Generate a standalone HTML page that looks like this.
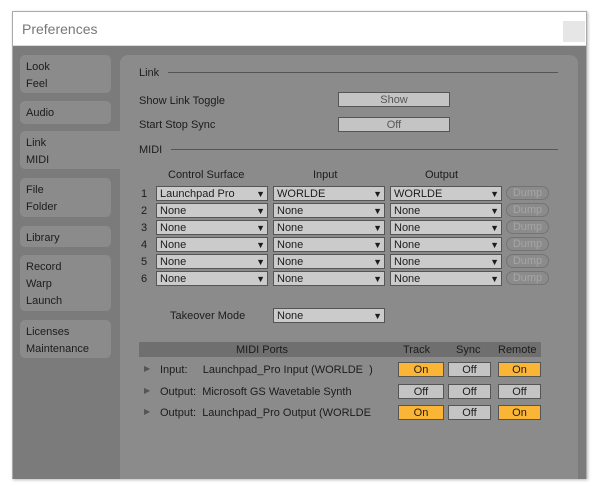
<!DOCTYPE html>
<html><head><style>
*{margin:0;padding:0;box-sizing:border-box}
body{width:603px;height:486px;background:#fff;position:relative;overflow:hidden;font-family:"Liberation Sans",sans-serif;font-size:11px;color:#1c1c1c}
.a{position:absolute}
.win{left:12px;top:11px;width:575px;height:468px;border:1px solid #aaa;box-shadow:1px 1px 3px #bbb}
.tb{left:13px;top:12px;width:573px;height:34px;background:#fff;border-bottom:1px solid #ddd}
.side{left:13px;top:46px;width:573px;height:433px;background:#7b7b7b}
.panel{left:120px;top:55px;width:458px;height:424px;background:#8b8b8b;border-radius:8px 8px 0 0}
.tab{background:#8b8b8b;border-radius:5px;left:20px;width:91px;padding:4px 0 0 6px;line-height:17px}
.dd{background:#cbcbcb;border:1px solid #555;height:15px;line-height:14px;padding-left:3px}
.dd:after{content:"▼";position:absolute;right:2px;top:0;font-size:9px}
.btn{background:#c4c4c4;border:1px solid #555;height:15px;line-height:14px;text-align:center;color:#555}
.dump{border:1px solid #747474;border-radius:8px;height:14px;line-height:13px;color:#a6a6a6;width:43px;text-align:center}
.tg{height:15px;line-height:14px;text-align:center;border:1px solid #555;background:#c4c4c4}
.on{background:#fbb536}
.line{height:1px;background:#555}
</style></head><body>
<div class="a win"></div>
<div class="a tb"></div>
<div class="a" style="left:22px;top:21px;font-size:14px;color:#777">Preferences</div>
<div class="a" style="left:563px;top:21px;width:22px;height:21px;background:#e6e6e6"></div>
<div class="a side"></div>
<div class="a tab" style="top:55px;height:38px">Look<br>Feel</div>
<div class="a tab" style="top:101px;height:23px">Audio</div>
<div class="a tab" style="top:131px;height:38px;width:104px;border-radius:5px 0 0 5px">Link<br>MIDI</div>
<div class="a tab" style="top:178px;height:39px">File<br>Folder</div>
<div class="a tab" style="top:226px;height:21px">Library</div>
<div class="a tab" style="top:255px;height:56px">Record<br>Warp<br>Launch</div>
<div class="a tab" style="top:320px;height:38px">Licenses<br>Maintenance</div>
<div class="a panel"></div>
<div class="a" style="left:139px;top:67px">Link</div>
<div class="a line" style="left:168px;top:72px;width:390px"></div>
<div class="a" style="left:139px;top:95px">Show Link Toggle</div>
<div class="a" style="left:139px;top:119px">Start Stop Sync</div>
<div class="a btn" style="left:338px;top:92px;width:112px">Show</div>
<div class="a btn" style="left:338px;top:117px;width:112px">Off</div>
<div class="a" style="left:139px;top:144px">MIDI</div>
<div class="a line" style="left:171px;top:149px;width:387px"></div>
<div class="a" style="left:168px;top:169px">Control Surface</div>
<div class="a" style="left:313px;top:169px">Input</div>
<div class="a" style="left:425px;top:169px">Output</div>
<div id="rows"></div>
<div class="a" style="left:170px;top:310px">Takeover Mode</div>
<div class="a dd" style="left:273px;top:308px;width:112px">None</div>
<div class="a" style="left:139px;top:342px;width:402px;height:15px;background:#6f6f6f"></div>
<div class="a" style="left:236px;top:344px">MIDI Ports</div>
<div class="a" style="left:403px;top:344px">Track</div>
<div class="a" style="left:456px;top:344px">Sync</div>
<div class="a" style="left:498px;top:344px">Remote</div>
<div class="a" style="left:144px;top:364px;font-size:8px;color:#555">▶</div>
<div class="a" style="left:160px;top:364px">Input:&nbsp;&nbsp;&nbsp;&nbsp; Launchpad_Pro Input (WORLDE&nbsp; )</div>
<div class="a" style="left:144px;top:386px;font-size:8px;color:#555">▶</div>
<div class="a" style="left:160px;top:386px">Output:&nbsp; Microsoft GS Wavetable Synth</div>
<div class="a" style="left:144px;top:407px;font-size:8px;color:#555">▶</div>
<div class="a" style="left:160px;top:407px">Output:&nbsp; Launchpad_Pro Output (WORLDE</div>
<div class="a tg on" style="left:398px;top:362px;width:46px">On</div>
<div class="a tg" style="left:448px;top:362px;width:43px">Off</div>
<div class="a tg on" style="left:498px;top:362px;width:43px">On</div>
<div class="a tg" style="left:398px;top:384px;width:46px">Off</div>
<div class="a tg" style="left:448px;top:384px;width:43px">Off</div>
<div class="a tg" style="left:498px;top:384px;width:43px">Off</div>
<div class="a tg on" style="left:398px;top:405px;width:46px">On</div>
<div class="a tg" style="left:448px;top:405px;width:43px">Off</div>
<div class="a tg on" style="left:498px;top:405px;width:43px">On</div>
<script>
var h='';
for(var i=0;i<6;i++){var y=186+i*17;var a=i?'None':'Launchpad Pro',b=i?'None':'WORLDE';
h+='<div class="a" style="left:141px;top:'+(y+2)+'px">'+(i+1)+'</div>'+
'<div class="a dd" style="left:156px;top:'+y+'px;width:112px">'+a+'</div>'+
'<div class="a dd" style="left:273px;top:'+y+'px;width:112px">'+b+'</div>'+
'<div class="a dd" style="left:390px;top:'+y+'px;width:112px">'+b+'</div>'+
'<div class="a dump" style="left:506px;top:'+y+'px">Dump</div>';}
document.getElementById('rows').innerHTML=h;
</script>
</body></html>
